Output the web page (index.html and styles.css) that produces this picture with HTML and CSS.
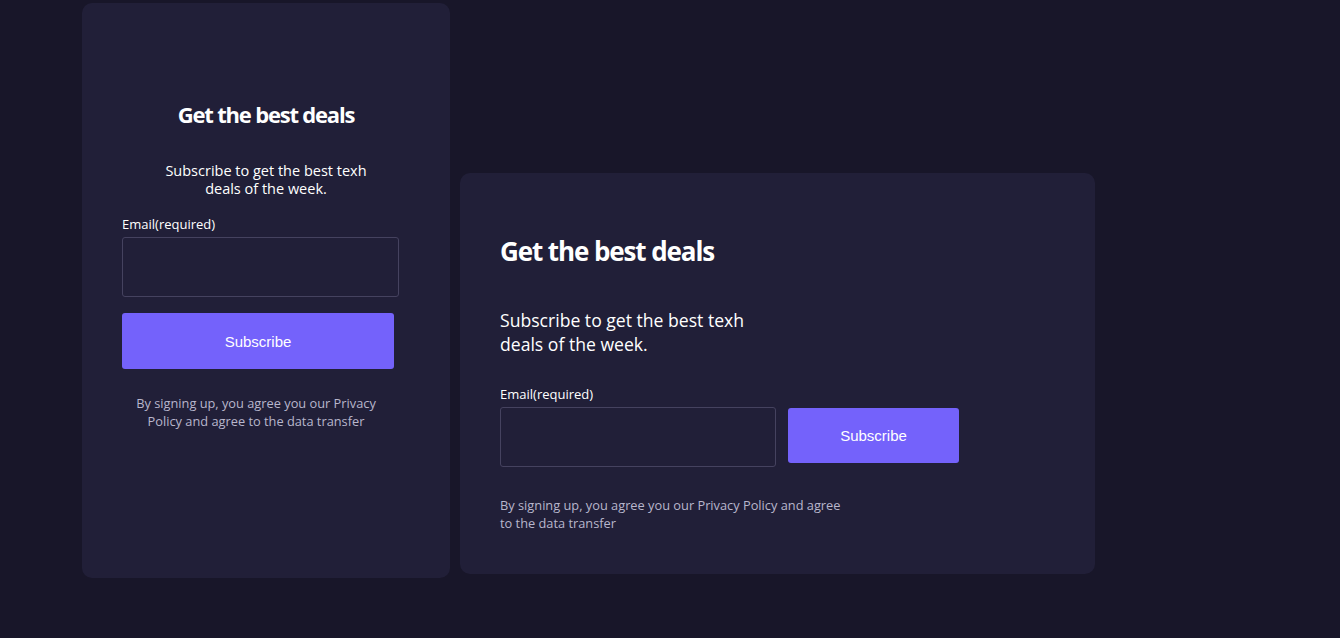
FILE: index.html
```html
<!DOCTYPE html>
<html lang="en">
<head>
<meta charset="utf-8">
<title>Get the best deals</title>
<link rel="stylesheet" href="styles.css">
</head>
<body>
<main class="page">
  <section class="card card-stack">
    <h2 class="title">Get the best deals</h2>
    <p class="subtitle">Subscribe to get the best texh deals of the week.</p>
    <form class="form">
      <label class="label" for="e1">Email(required)</label>
      <input class="input" id="e1" type="email">
      <button class="btn" type="button">Subscribe</button>
      <p class="note">By signing up, you agree you our Privacy Policy and agree to the data transfer</p>
    </form>
  </section>
  <section class="card card-row">
    <h2 class="title">Get the best deals</h2>
    <p class="subtitle">Subscribe to get the best texh deals of the week.</p>
    <form class="form">
      <label class="label" for="e2">Email(required)</label>
      <div class="row">
        <input class="input" id="e2" type="email">
        <button class="btn" type="button">Subscribe</button>
      </div>
    </form>
    <p class="note">By signing up, you agree you our Privacy Policy and agree to the data transfer</p>
  </section>
</main>
</body>
</html>
```

FILE: styles.css
```css
* { box-sizing: border-box; }
html, body { margin: 0; padding: 0; }
body {
  background: #181629;
  font-family: "Open Sans", "Noto Sans", sans-serif;
  color: #ffffff;
  width: 1340px;
  height: 638px;
  overflow: hidden;
}
.page {
  display: flex;
  align-items: flex-start;
  gap: 10px;
  padding: 3px 0 0 82px;
}
.card {
  background: #211f38;
  border-radius: 10px;
}
.title {
  margin: 0;
  font-weight: 700;
}
.subtitle { margin: 0; }
.label {
  display: block;
  font-size: 13px;
  line-height: 18px;
  margin-bottom: 4px;
}
.input {
  display: block;
  height: 60px;
  background: #211f38;
  border: 1px solid #45425f;
  border-radius: 3px;
  color: #fff;
  font: inherit;
  outline: none;
}
.btn {
  background: #7462fb;
  border: none;
  border-radius: 3px;
  color: #fff;
  font-family: "Liberation Sans", Arial, sans-serif;
  font-size: 15px;
  cursor: pointer;
}
.note {
  margin: 0;
  font-size: 12.8px;
  line-height: 18px;
  color: #b8b6cc;
}

/* stacked card */
.card-stack {
  width: 368px;
  height: 575px;
  padding: 96px 40px 0;
  display: flex;
  flex-direction: column;
  align-items: center;
}
.card-stack .title {
  font-size: 22px;
  line-height: 30px;
  letter-spacing: -1.2px;
  text-align: center;
}
.card-stack .subtitle {
  width: 210px;
  margin-top: 33px;
  font-size: 14.5px;
  line-height: 18px;
  text-align: center;
}
.card-stack .form {
  align-self: stretch;
  margin-top: 17px;
}
.card-stack .input { width: 277px; }
.card-stack .btn {
  display: block;
  width: 272px;
  height: 56px;
  margin-top: 16px;
}
.card-stack .note {
  width: 272px;
  padding: 0 16px 0 12px;
  margin-top: 25px;
  text-align: center;
}

/* row card */
.card-row {
  width: 635px;
  height: 401px;
  margin-top: 170px;
  padding: 60px 40px 0;
}
.card-row .title {
  font-size: 26px;
  line-height: 36px;
  letter-spacing: -1.1px;
}
.card-row .subtitle {
  width: 260px;
  margin-top: 39px;
  font-size: 17.6px;
  line-height: 24px;
}
.card-row .form { margin-top: 29px; }
.row {
  display: flex;
  align-items: flex-start;
  gap: 12px;
}
.card-row .input { width: 276px; }
.card-row .btn {
  width: 171px;
  height: 55px;
  margin-top: 1px;
}
.card-row .note {
  width: 350px;
  margin-top: 29px;
}
```
